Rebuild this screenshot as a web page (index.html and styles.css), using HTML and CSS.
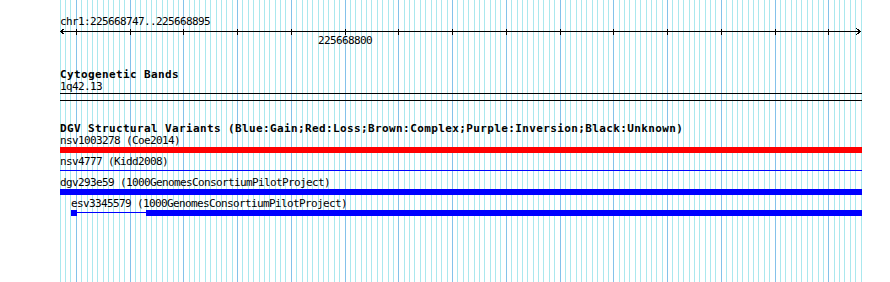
FILE: index.html
```html
<!DOCTYPE html>
<html lang="en">
<head>
  <meta charset="UTF-8">
  <title>chr1:225668747-225668895</title>
  <link rel="stylesheet" href="styles.css">
</head>
<body>
  <div class="browser">
    <svg class="guides" id="guides" width="890" height="282"></svg>

    <div class="tracks">
      <div class="pos">chr1:225668747..225668895</div>
      <svg class="ruler" id="ruler" width="802" height="8"></svg>
      <div class="ruler-labels">
        <span class="tick-label" style="left:285px">225668800</span>
      </div>

      <div class="track cyto">
        <div class="track-title">Cytogenetic Bands</div>
        <div class="item-label">1q42.13</div>
        <div class="band"></div>
      </div>

      <div class="track dgv">
        <div class="track-title">DGV Structural Variants (Blue:Gain;Red:Loss;Brown:Complex;Purple:Inversion;Black:Unknown)</div>

        <div class="feature">
          <div class="item-label">nsv1003278 (Coe2014)</div>
          <div class="lane"><div class="bar loss" style="left:0;width:802px"></div></div>
        </div>

        <div class="feature">
          <div class="item-label">nsv4777 (Kidd2008)</div>
          <div class="lane"><div class="bar gain thin" style="left:0;width:802px"></div></div>
        </div>

        <div class="feature">
          <div class="item-label">dgv293e59 (1000GenomesConsortiumPilotProject)</div>
          <div class="lane"><div class="bar gain" style="left:0;width:802px"></div></div>
        </div>

        <div class="feature">
          <div class="item-label" style="padding-left:11px">esv3345579 (1000GenomesConsortiumPilotProject)</div>
          <div class="lane">
            <div class="bar gain" style="left:11px;width:6px"></div>
            <div class="bar gain thin" style="left:17px;width:69px"></div>
            <div class="bar gain" style="left:86px;width:716px"></div>
          </div>
        </div>
      </div>
    </div>
  </div>

  <script>
    // 149 bases across the window, one guide per base, darker every 10
    const start = 225668747, bases = 149, x0 = 60.2, scale = 5.375;
    const ns = 'http://www.w3.org/2000/svg';
    const guides = document.getElementById('guides');
    const ruler = document.getElementById('ruler');
    const rect = (svg, x, y, w, h, cls) => {
      const r = document.createElementNS(ns, 'rect');
      r.setAttribute('x', x); r.setAttribute('y', y);
      r.setAttribute('width', w); r.setAttribute('height', h);
      r.setAttribute('class', cls);
      svg.appendChild(r);
    };
    for (let i = 0; i <= bases; i++) {
      const x = Math.floor(x0 + i * scale);
      const major = (start + i) % 10 === 0;
      rect(guides, x, 0, 1, 282, major ? 'guide major' : 'guide');
      if (major) rect(ruler, x - 60, 2, 1, 6, 'tick');
    }
    rect(ruler, 0, 4, 801, 1, 'tick');
    [['4.5,1.5 0.5,4.5 4.5,7.5'], ['796.5,1.5 800.5,4.5 796.5,7.5']].forEach(p => {
      const a = document.createElementNS(ns, 'polyline');
      a.setAttribute('points', p[0]);
      a.setAttribute('class', 'arrow');
      ruler.appendChild(a);
    });
  </script>
</body>
</html>
```

FILE: styles.css
```css
:root {
  --guide: #aae8ee;
  --guide-major: #84c2ea;
  --gain: #0000ff;
  --loss: #ff0000;
  --ink: #000000;
}
* { box-sizing: border-box; margin: 0; padding: 0; }
body {
  background: #ffffff;
  color: var(--ink);
  font-family: "DejaVu Sans Mono", "Liberation Mono", monospace;
  font-size: 11px;
  letter-spacing: -0.62px;
  line-height: 11px;
}
.browser {
  position: relative;
  width: 890px;
  height: 282px;
  padding: 16px 0 0 60px;
  overflow: hidden;
}
.guides { position: absolute; left: 0; top: 0; }
.guide { fill: var(--guide); }
.guide.major { fill: var(--guide-major); }

.tracks { position: relative; width: 802px; }
.pos { white-space: nowrap; }
.ruler { display: block; shape-rendering: crispEdges; }
.tick { fill: var(--ink); }
.arrow { fill: none; stroke: var(--ink); stroke-width: 1; }
.ruler-labels { position: relative; height: 11px; }
.tick-label { position: absolute; top: 0; transform: translateX(-50%); white-space: nowrap; }

.track-title {
  font-weight: bold;
  letter-spacing: 0.38px;
  white-space: nowrap;
  margin-bottom: 1px;
}
.item-label { white-space: nowrap; }

.cyto { margin-top: 23px; }
.band {
  margin-top: 1px;
  height: 8px;
  border-top: 1px solid var(--ink);
  border-bottom: 1px solid var(--ink);
}

.dgv { margin-top: 22px; }
.feature { height: 21px; }
.lane { position: relative; height: 6px; margin-top: 1px; }
.bar { position: absolute; top: 0; height: 6px; }
.bar.thin { top: 2px; height: 1px; }
.gain { background: var(--gain); }
.loss { background: var(--loss); }
```
